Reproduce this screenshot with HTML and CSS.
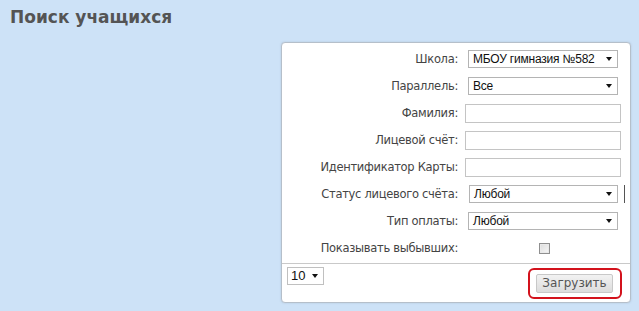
FILE: index.html
```html
<!DOCTYPE html>
<html lang="ru">
<head>
<meta charset="utf-8">
<link rel="stylesheet" href="styles.css">
</head>
<body>
<h1 class="title">Поиск учащихся</h1>
<div class="panel">
  <div class="form">
    <div class="label">Школа:</div>
    <div class="select"><span>МБОУ гимназия №582</span><i class="arrow"></i></div>
    <div class="label">Параллель:</div>
    <div class="select"><span>Все</span><i class="arrow"></i></div>
    <div class="label">Фамилия:</div>
    <div class="input"></div>
    <div class="label">Лицевой счёт:</div>
    <div class="input"></div>
    <div class="label">Идентификатор Карты:</div>
    <div class="input"></div>
    <div class="label">Статус лицевого счёта:</div>
    <div class="select status"><span>Любой</span><i class="arrow"></i><b class="bar"></b></div>
    <div class="label">Тип оплаты:</div>
    <div class="select"><span>Любой</span><i class="arrow"></i></div>
    <div class="label">Показывать выбывших:</div>
    <div class="checkcell"><span class="check"></span></div>
  </div>
  <div class="footer">
    <div class="select small"><span>10</span><i class="arrow"></i></div>
    <div class="btnwrap"><div class="button">Загрузить</div></div>
  </div>
</div>
</body>
</html>
```
FILE: styles.css
```css
html, body {
  margin: 0;
  padding: 0;
  background: #cde2f7;
  height: 100%;
}
body {
  font-family: "DejaVu Sans", Verdana, sans-serif;
  overflow: hidden;
}
.title {
  margin: 0;
  padding: 7px 0 0 10px;
  font-size: 17px;
  line-height: 20px;
  font-weight: bold;
  color: #545454;
}
.panel {
  margin: 15px 0 0 281px;
  width: 348px;
  height: 259px;
  background: #fff;
  border: 1px solid #b5bfca;
  border-radius: 4px;
  box-shadow: 0 0 2px rgba(120, 140, 160, 0.35);
  position: relative;
}
.form {
  display: grid;
  grid-template-columns: 176px 156px;
  column-gap: 7px;
  row-gap: 9px;
  padding-top: 7px;
  grid-auto-rows: 18px;
  align-items: center;
}
.label {
  text-align: right;
  font-size: 11.5px;
  letter-spacing: -0.3px;
  color: #444;
  line-height: 18px;
  white-space: nowrap;
}
.select {
  margin-left: 3px;
  width: 148px;
  height: 16px;
  border: 1px solid #b4b4b4;
  background: #fff;
  display: flex;
  align-items: center;
  font-family: "Liberation Sans", Arial, sans-serif;
  font-size: 12px;
  letter-spacing: -0.2px;
  color: #111;
  position: relative;
}
.select span {
  flex: 1;
  padding-left: 4px;
  line-height: 16px;
  white-space: nowrap;
}
.arrow {
  width: 0;
  height: 0;
  border-left: 3.5px solid transparent;
  border-right: 3.5px solid transparent;
  border-top: 4px solid #111;
  margin-right: 5px;
}
.status {
  margin-left: 4px;
  width: 147px;
}
.bar {
  position: absolute;
  left: 154px;
  top: -1px;
  width: 1px;
  height: 18px;
  background: #555;
}
.input {
  height: 17px;
  border: 1px solid #c4c4c4;
  background: #fff;
  width: 154px;
}
.checkcell {
  display: flex;
  align-items: center;
}
.check {
  margin-left: 74px;
  width: 9px;
  height: 9px;
  border: 1px solid #8f8f8f;
  background: linear-gradient(135deg, #dcdcdc, #f7f7f7);
  box-shadow: inset 0 0 0 1px #e9e9e9;
}
.footer {
  position: absolute;
  left: 0;
  right: 0;
  top: 220px;
  border-top: 1px solid #c9c9c9;
  display: flex;
  justify-content: space-between;
  align-items: flex-start;
  padding: 3px 8px 0 5px;
}
.select.small {
  margin-left: 0;
  width: 35px;
  height: 16px;
  border-color: #c0c0c0;
  font-size: 13px;
  letter-spacing: 0;
}
.select.small span {
  padding-left: 3px;
}
.btnwrap {
  margin-top: 1px;
  border: 2px solid #d3121c;
  border-radius: 6px;
  padding: 4px 7px 4px 6px;
}
.button {
  width: 75px;
  height: 17px;
  border: 1px solid #c8c8c8;
  border-radius: 2px;
  background: linear-gradient(#f2f2f2, #dcdcdc);
  font-size: 12px;
  line-height: 17px;
  text-align: center;
  color: #555;
}
```
